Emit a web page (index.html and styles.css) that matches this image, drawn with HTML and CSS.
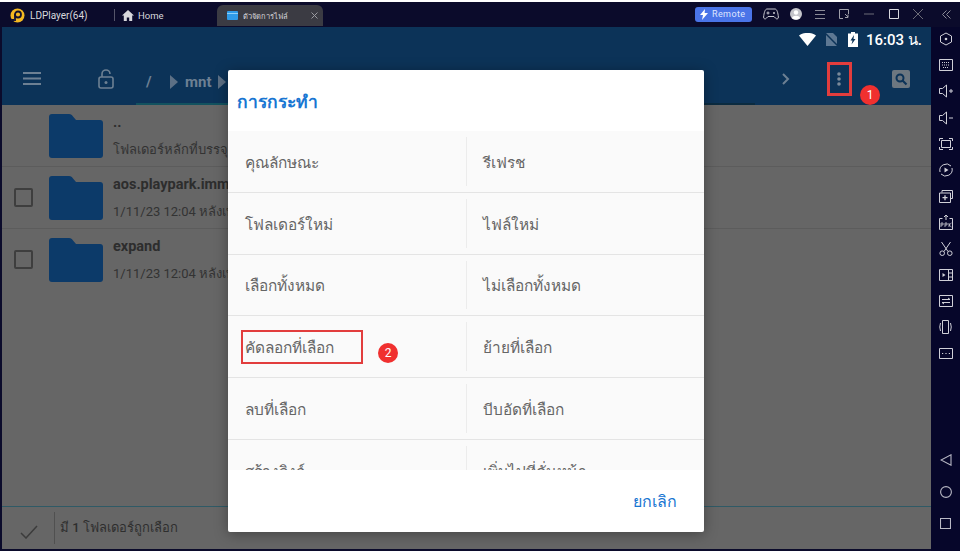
FILE: index.html
```html
<!DOCTYPE html>
<html lang="th">
  <head>
    <meta charset="UTF-8" />
    <title>LDPlayer</title>
    <link rel="stylesheet" href="styles.css">
  </head>
  <body>
    <div class="app">
      <!-- title bar -->
      <header class="titlebar">
        <div class="brand">
          <svg width="15" height="15" viewBox="0 0 15 15"><circle cx="7.5" cy="7.5" r="7" fill="#f5b921"/><circle cx="8" cy="6.5" r="3" fill="none" stroke="#14122e" stroke-width="1.8"/><path d="M5 6v7M1 12h3" stroke="#14122e" stroke-width="1.8"/></svg>
          <span>LDPlayer(64)</span>
        </div>
        <div class="home">
          <svg width="12" height="11" viewBox="0 0 12 11"><path d="M6 0L0 5.5h1.8V11h3V7.5h2.4V11h3V5.5H12z" fill="#d8d8dc"/></svg>
          <span>Home</span>
        </div>
        <div class="tab">
          <svg width="11" height="9" viewBox="0 0 11 9"><path d="M0 1a1 1 0 0 1 1-1h9a1 1 0 0 1 1 1v7a1 1 0 0 1-1 1H1a1 1 0 0 1-1-1z" fill="#2f9be8"/><path d="M0 2h11v1H0z" fill="#8fd0f8"/></svg>
          <span class="tab-name">ตัวจัดการไฟล์</span>
          <svg class="tab-x" width="7" height="7" viewBox="0 0 7 7"><path d="M.5.5l6 6M6.5.5l-6 6" stroke="#9a9aa0" stroke-width="1"/></svg>
        </div>
        <div class="win-buttons">
          <div class="remote">
            <svg width="8" height="11" viewBox="0 0 8 11"><path d="M5 0L0 6h3l-1 5 6-7H4.6z" fill="#fff"/></svg>
            <span>Remote</span>
          </div>
          <svg class="gamepad" width="16" height="12" viewBox="0 0 16 12"><path d="M4 1h8c2 0 3 4 3.400 8 .2 2-2 2.500-3 1L11 8.500H5L3.600 10c-1 1.500-3.200 1-3-1C1 5 2 1 4 1z" fill="none" stroke="#c8c8d0"/><path d="M3.500 5h3M5 3.500v3" stroke="#c8c8d0"/><circle cx="11" cy="5" r="1" fill="#c8c8d0"/></svg>
          <svg class="avatar" width="12" height="12" viewBox="0 0 12 12"><circle cx="6" cy="6" r="6" fill="#c4c4ca"/><circle cx="6" cy="4.500" r="2.200" fill="#fff"/><path d="M2 10c1-3 7-3 8 0a6 6 0 0 1-8 0z" fill="#fff"/></svg>
          <svg class="menu" width="10" height="9" viewBox="0 0 10 9"><path d="M0 .5h10M0 4.500h10M0 8.500h10" stroke="#8a8a96"/></svg>
          <svg class="restore" width="10" height="10" viewBox="0 0 10 10"><path d="M4 9.500H.5V.5h9V5" fill="none" stroke="#a0a0aa"/><path d="M6 5l3 3M9 5.500V8.500H6" fill="none" stroke="#a0a0aa"/></svg>
          <svg class="minimize" width="10" height="10" viewBox="0 0 10 10"><path d="M0 5h10" stroke="#6c6c78"/></svg>
          <svg class="maximize" width="10" height="10" viewBox="0 0 10 10"><path d="M.5.500h9v9h-9z" fill="none" stroke="#d8d8de"/></svg>
          <svg class="close" width="10" height="10" viewBox="0 0 10 10"><path d="M0 0l10 10M10 0L0 10" stroke="#6c6c78"/></svg>
        </div>
        <svg class="collapse" width="9" height="9" viewBox="0 0 9 9"><path d="M4.500.5l-4 4 4 4M8.500.5l-4 4 4 4" fill="none" stroke="#8a8a96"/></svg>
      </header>

      <div class="main">
        <div class="screen">
          <!-- android status bar -->
          <div class="statusbar">
            <svg width="17" height="13" viewBox="0 0 17 13"><path d="M0 2.500C5-1 12-1 17 2.500L8.500 13z" fill="#fff"/></svg>
            <svg class="sim" width="13" height="13" viewBox="0 0 13 13"><path d="M1 0h7l4 4v9H1z" fill="#5e7893"/><path d="M0 0l13 13" stroke="#0c3358" stroke-width="1.500"/></svg>
            <svg class="battery" width="10" height="15" viewBox="0 0 10 15"><path d="M3 0h4v1.500h3V15H0V1.500h3z" fill="#fff"/><path d="M6 3L2.500 8.500h2l-1 4L7.500 7h-2z" fill="#0c3358"/></svg>
            <span class="clock">16:03 น.</span>
          </div>

          <!-- file manager toolbar -->
          <div class="toolbar">
            <svg class="hamburger" width="18" height="13" viewBox="0 0 18 13"><path d="M0 1h18M0 6.500h18M0 12h18" stroke="#6d8093" stroke-width="2"/></svg>
            <svg class="lock" width="16" height="20" viewBox="0 0 16 20"><rect x="1" y="8" width="14" height="11" rx="2" fill="none" stroke="#6d8093" stroke-width="1.600"/><path d="M4 8V5a4 4 0 0 1 8 0" fill="none" stroke="#6d8093" stroke-width="1.600"/><circle cx="8" cy="13.500" r="1.500" fill="#6d8093"/></svg>
            <div class="path">
              <span class="crumb-root">/</span>
              <svg width="8" height="14" viewBox="0 0 8 14"><path d="M0 0l8 7-8 7z" fill="#5d7085"/></svg>
              <span class="crumb">mnt</span>
              <svg width="8" height="14" viewBox="0 0 8 14"><path d="M0 0l8 7-8 7z" fill="#5d7085"/></svg>
            </div>
            <svg class="chevron" width="8" height="12" viewBox="0 0 8 12"><path d="M1 1l5 5-5 5" fill="none" stroke="#6d8093" stroke-width="2"/></svg>
            <svg class="dots" width="4" height="14" viewBox="0 0 4 14"><circle cx="2" cy="2" r="1.800" fill="#7b8a99"/><circle cx="2" cy="7" r="1.800" fill="#7b8a99"/><circle cx="2" cy="12" r="1.800" fill="#7b8a99"/></svg>
            <svg class="search" width="18" height="18" viewBox="0 0 18 18"><rect width="18" height="18" rx="2" fill="#6d7780"/><circle cx="8" cy="8" r="3.500" fill="none" stroke="#0c3358" stroke-width="2"/><path d="M10.500 10.500l4 4" stroke="#0c3358" stroke-width="2.200"/></svg>
          </div>

          <!-- folder list -->
          <ul class="files">
            <li class="file">
              <span class="check-slot"></span>
              <svg class="folder" width="54" height="44" viewBox="0 0 54 44"><path d="M3 0h17c2 0 3 1 4 2.500L27 6h24a3 3 0 0 1 3 3v32a3 3 0 0 1-3 3H3a3 3 0 0 1-3-3V3a3 3 0 0 1 3-3z" fill="#0c3a69"/></svg>
              <div class="file-text">
                <p class="file-name">..</p>
                <p class="file-sub">โฟลเดอร์หลักที่บรรจุ</p>
              </div>
            </li>
            <li class="file">
              <span class="check-slot"><span class="checkbox"></span></span>
              <svg class="folder" width="54" height="44" viewBox="0 0 54 44"><path d="M3 0h17c2 0 3 1 4 2.500L27 6h24a3 3 0 0 1 3 3v32a3 3 0 0 1-3 3H3a3 3 0 0 1-3-3V3a3 3 0 0 1 3-3z" fill="#0c3a69"/></svg>
              <div class="file-text">
                <p class="file-name">aos.playpark.imm</p>
                <p class="file-sub">1/11/23 12:04 หลังเที่ยง</p>
              </div>
            </li>
            <li class="file">
              <span class="check-slot"><span class="checkbox"></span></span>
              <svg class="folder" width="54" height="44" viewBox="0 0 54 44"><path d="M3 0h17c2 0 3 1 4 2.500L27 6h24a3 3 0 0 1 3 3v32a3 3 0 0 1-3 3H3a3 3 0 0 1-3-3V3a3 3 0 0 1 3-3z" fill="#0c3a69"/></svg>
              <div class="file-text">
                <p class="file-name">expand</p>
                <p class="file-sub">1/11/23 12:04 หลังเที่ยง</p>
              </div>
            </li>
          </ul>

          <div class="selbar">
            <svg class="selbar-check" width="18" height="14" viewBox="0 0 18 14"><path d="M1 8l5 5L17 1" fill="none" stroke="#3c3c3c" stroke-width="1.500"/></svg>
            <span class="selbar-text">มี 1 โฟลเดอร์ถูกเลือก</span>
          </div>
        </div>

        <!-- emulator side bar -->
        <aside class="sidebar">
          <div class="side-top">
            <svg width="14" height="14" viewBox="0 0 14 14"><path d="M7 1l5.500 3v6L7 13 1.500 10V4z" fill="none" stroke="#d0d0d8"/><circle cx="7" cy="7" r="1.300" fill="#d0d0d8"/></svg>
            <svg width="14" height="12" viewBox="0 0 14 12"><path d="M.5.500h13v11H.5z" fill="none" stroke="#d0d0d8"/><path d="M3 3.500h8M3 6h8M4 8.500h6" stroke="#d0d0d8" stroke-dasharray="1 1"/></svg>
            <svg width="14" height="14" viewBox="0 0 14 14"><path d="M.5 4.500h3L7.500 1v12l-4-3.500h-3z" fill="none" stroke="#d0d0d8"/><path d="M10 7h4M12 5v4" stroke="#d0d0d8"/></svg>
            <svg width="14" height="14" viewBox="0 0 14 14"><path d="M.5 4.500h3L7.500 1v12l-4-3.500h-3z" fill="none" stroke="#d0d0d8"/><path d="M10 7h4" stroke="#d0d0d8"/></svg>
            <svg width="14" height="12" viewBox="0 0 14 12"><path d="M.5 3V.5H4M10 .5h3.500V3M13.500 9v2.500H10M4 11.500H.5V9" fill="none" stroke="#d0d0d8"/><path d="M2.500 2.500h9v7h-9z" fill="none" stroke="#d0d0d8"/></svg>
            <svg width="14" height="14" viewBox="0 0 14 14"><path d="M1 9a6.500 6.500 0 0 1 11-6M13 5a6.500 6.500 0 0 1-11 6" fill="none" stroke="#d0d0d8"/><path d="M5.500 4.500l4 2.500-4 2.500z" fill="#d0d0d8"/></svg>
            <svg width="14" height="13" viewBox="0 0 14 13"><path d="M3 2.500V.5h10.500v8h-2" fill="none" stroke="#d0d0d8"/><path d="M.5 3h11v9.500H.5z" fill="none" stroke="#d0d0d8"/><path d="M3.500 7.700h5M6 5.200v5" stroke="#d0d0d8" stroke-width="1.300"/></svg>
            <svg width="14" height="15" viewBox="0 0 14 15"><path d="M3.500 3.500h-3v11h13v-11h-3" fill="none" stroke="#d0d0d8"/><path d="M7 0v5M5 2l2-2 2 2" fill="none" stroke="#d0d0d8"/><path d="M2 12V8h2v2H2M6 12V8h2v2H6M10 8v4M12.500 8L10 10l2.500 2" fill="none" stroke="#d0d0d8" stroke-width=".8"/></svg>
            <svg width="14" height="14" viewBox="0 0 14 14"><path d="M2.500 0l6.500 9.500M11.500 0L5 9.500" stroke="#d0d0d8"/><circle cx="3.200" cy="11.200" r="2.300" fill="none" stroke="#d0d0d8"/><circle cx="10.800" cy="11.200" r="2.300" fill="none" stroke="#d0d0d8"/></svg>
            <svg width="14" height="12" viewBox="0 0 14 12"><path d="M.5.500h13v11H.5zM9.500.5v11M9.500 4h4M9.500 8h4" fill="none" stroke="#d0d0d8"/><path d="M3.500 4l3 2-3 2z" fill="#d0d0d8"/></svg>
            <svg width="14" height="12" viewBox="0 0 14 12"><path d="M.5.500h13v11H.5z" fill="none" stroke="#d0d0d8"/><path d="M3 4.500h8L9 3M11 7.500H3l2 1.500" fill="none" stroke="#d0d0d8"/></svg>
            <svg width="13" height="14" viewBox="0 0 13 14"><path d="M3.500.5h6v13h-6zM1.500 3Q0 7 1.500 11M11.500 3q1.500 4 0 8" fill="none" stroke="#d0d0d8"/></svg>
            <svg width="14" height="11" viewBox="0 0 14 11"><path d="M.5.500h13v10H.5z" fill="none" stroke="#d0d0d8"/><path d="M3 5.500h1.200M6.400 5.500h1.200M9.800 5.500H11" stroke="#d0d0d8"/></svg>
          </div>
          <div class="side-nav">
            <svg width="12" height="12" viewBox="0 0 12 12"><path d="M11 .8v10.400L1 6z" fill="none" stroke="#b8b8c4" stroke-width="1.100"/></svg>
            <svg width="12" height="12" viewBox="0 0 12 12"><circle cx="6" cy="6" r="5.400" fill="none" stroke="#b8b8c4" stroke-width="1.100"/></svg>
            <svg width="11" height="11" viewBox="0 0 11 11"><path d="M.5.500h10v10H.5z" fill="none" stroke="#b8b8c4" stroke-width="1.100"/></svg>
          </div>
        </aside>
      </div>

      <!-- action dialog -->
      <div class="dialog">
        <h2 class="dialog-title">การกระทำ</h2>
        <div class="actions">
          <div class="action"><span>คุณลักษณะ</span></div>
          <div class="action"><span>รีเฟรช</span></div>
          <div class="action"><span>โฟลเดอร์ใหม่</span></div>
          <div class="action"><span>ไฟล์ใหม่</span></div>
          <div class="action"><span>เลือกทั้งหมด</span></div>
          <div class="action"><span>ไม่เลือกทั้งหมด</span></div>
          <div class="action"><span>คัดลอกที่เลือก</span></div>
          <div class="action"><span>ย้ายที่เลือก</span></div>
          <div class="action"><span>ลบที่เลือก</span></div>
          <div class="action"><span>บีบอัดที่เลือก</span></div>
          <div class="action"><span>สร้างลิงก์</span></div>
          <div class="action"><span>เพิ่มไปที่คั่นหน้า</span></div>
        </div>
        <div class="dialog-foot"><span class="cancel">ยกเลิก</span></div>
      </div>

      <!-- tutorial annotations -->
      <div class="mark mark-dots"></div>
      <div class="mark mark-copy"></div>
      <div class="badge badge-1">1</div>
      <div class="badge badge-2">2</div>
    </div>
  </body>
</html>
```

FILE: styles.css
```css
html, body {
  margin: 0;
  padding: 0;
}

body {
  width: 960px;
  height: 551px;
  overflow: hidden;
  font-family: Roboto, "Noto Sans", "Liberation Sans", sans-serif;
  background-color: #fff;
}

p, h2, ul {
  margin: 0;
  padding: 0;
}

.app {
  position: relative;
  display: flex;
  flex-direction: column;
  width: 960px;
  height: 549px;
  margin-top: 2px;
  overflow: hidden;
  background-color: #0b0b2b;
}

/* title bar */
.titlebar {
  display: flex;
  align-items: center;
  height: 24px;
  flex: none;
  padding-top: 1px;
  background-color: #0b0b2b;
  color: #d8d8dc;
}

.brand {
  display: flex;
  align-items: center;
  gap: 5px;
  width: 104px;
  padding-left: 10px;
  font-size: 10px;
}

.home {
  display: flex;
  align-items: center;
  gap: 4px;
  width: 95px;
  height: 12px;
  padding-left: 7px;
  border-left: 1px solid #55556a;
  font-size: 9.500px;
}

.tab {
  display: flex;
  align-items: center;
  gap: 5px;
  align-self: flex-end;
  width: 91px;
  height: 21px;
  margin-bottom: 1px;
  padding: 0 5px 0 10px;
  border-radius: 6px 6px 0 0;
  background-color: #3b3b43;
  font-size: 7.500px;
}

.tab-name {
  flex: 1;
  white-space: nowrap;
}

.win-buttons {
  display: flex;
  align-items: center;
  margin: 0 0 2px 372px;
}

.remote {
  display: flex;
  align-items: center;
  gap: 4px;
  width: 57px;
  height: 15px;
  padding-left: 5px;
  box-sizing: border-box;
  border-radius: 3px;
  background-color: #4a74e8;
  color: #dfe6ff;
  font-size: 9px;
  letter-spacing: 0.4px;
}

.gamepad { margin-left: 11px; }
.avatar { margin-left: 11px; }
.menu { margin-left: 13px; }
.restore { margin-left: 14px; }
.minimize { margin-left: 15px; }
.maximize { margin-left: 15px; }
.close { margin-left: 14px; }

.collapse {
  margin: 0 0 2px 19px;
}

.main {
  display: flex;
  flex: 1;
  min-height: 0;
}

.screen {
  display: flex;
  flex-direction: column;
  flex: 1;
  min-width: 0;
  margin: 0 0 2px 2px;
  background-color: #666;
}

/* status bar */
.statusbar {
  display: flex;
  align-items: center;
  height: 25px;
  flex: none;
  padding-left: 797px;
  background-color: #0c3358;
}

.sim { margin-left: 9px; }
.battery { margin-left: 10px; }

.clock {
  margin-left: 8px;
  color: #fff;
  font-size: 15px;
  font-weight: 500;
  white-space: nowrap;
}

/* toolbar */
.toolbar {
  display: flex;
  align-items: center;
  height: 53px;
  flex: none;
  background-color: #0c3358;
}

.hamburger { margin-left: 21px; }
.lock { margin-left: 57px; }

.path {
  display: flex;
  align-items: center;
  gap: 7px;
  width: 619px;
  height: 44px;
  margin: 8px 0 0 22px;
  padding-left: 10px;
  box-sizing: border-box;
  border-bottom: 2px solid #0b2b40;
  border-image: linear-gradient(to right, #12525f 30%, #0b2b40 30%) 1;
  color: #6d8093;
  font-size: 15px;
  font-weight: 700;
}

.crumb-root {
  width: 17px;
}

.chevron { margin-left: 27px; }
.dots { margin-left: 47px; }
.search { margin-left: 51px; }

/* folder list */
.files {
  flex: 1;
  list-style: none;
}

.file {
  display: flex;
  align-items: center;
  height: 61px;
  border-bottom: 1px solid #5c5c5c;
}

.file:last-child {
  border-bottom: none;
}

.check-slot {
  display: flex;
  justify-content: center;
  width: 43px;
  margin-right: 4px;
}

.checkbox {
  width: 15px;
  height: 15px;
  border: 2px solid #3e3e3e;
  border-radius: 2px;
}

.folder {
  flex: none;
}

.file-text {
  margin-left: 10px;
  white-space: nowrap;
}

.file-name {
  color: #2d2d2d;
  font-size: 14.500px;
  font-weight: 700;
  line-height: 20px;
}

.file-sub {
  margin-top: 8px;
  color: #333;
  font-size: 13px;
  line-height: 18px;
}

.selbar {
  display: flex;
  align-items: center;
  height: 43px;
  flex: none;
  box-sizing: border-box;
  padding-left: 18px;
  border-top: 1px solid #2f5a66;
  color: #2e2e2e;
}

.selbar-check {
  margin-top: 7px;
}

.selbar-text {
  margin-left: 16px;
  padding-left: 5px;
  border-left: 1px solid #505050;
  font-size: 13px;
  font-weight: 500;
  line-height: 32px;
}

/* side bar */
.sidebar {
  display: flex;
  flex-direction: column;
  justify-content: space-between;
  align-items: center;
  width: 29px;
  flex: none;
  background-color: #06062a;
}

.side-top {
  display: grid;
  grid-auto-rows: 26.200px;
  place-items: center;
  margin-top: -1px;
}

.side-nav {
  display: flex;
  flex-direction: column;
  align-items: center;
  gap: 20px;
  padding-bottom: 22px;
}

/* dialog */
.dialog {
  position: absolute;
  left: 228px;
  top: 68px;
  display: flex;
  flex-direction: column;
  width: 476px;
  height: 462px;
  border-radius: 2px;
  background-color: #fff;
  box-shadow: 0 2px 14px rgba(0, 0, 0, 0.35);
}

.dialog-title {
  height: 61px;
  flex: none;
  padding-left: 9px;
  color: #1976d2;
  font-size: 17.500px;
  font-weight: 700;
  line-height: 64px;
}

.actions {
  display: grid;
  grid-template-columns: 238px 238px;
  grid-auto-rows: 61.750px;
  height: 339px;
  flex: none;
  overflow: hidden;
  background-color: #fafafa;
}

.action {
  display: flex;
  align-items: center;
  box-sizing: border-box;
  padding: 2px 0 0 17px;
  border-bottom: 1px solid #e4e4e4;
  color: #666;
  font-size: 15.400px;
}

.action:nth-child(even) {
  position: relative;
}

.action:nth-child(even)::before {
  content: "";
  position: absolute;
  left: 0;
  top: 6px;
  bottom: 6px;
  width: 1px;
  background-color: #ececec;
}

.dialog-foot {
  display: flex;
  justify-content: flex-end;
  align-items: center;
  flex: 1;
  padding-right: 27px;
}

.cancel {
  color: #1976d2;
  font-size: 16px;
  font-weight: 500;
}

/* annotations */
.mark {
  position: absolute;
  box-sizing: border-box;
  border: 2px solid #e23d3d;
}

.mark-dots {
  left: 827px;
  top: 60px;
  width: 25px;
  height: 34px;
  border-width: 3px;
}

.mark-copy {
  left: 241px;
  top: 328px;
  width: 122px;
  height: 34px;
}

.badge {
  position: absolute;
  width: 20px;
  height: 20px;
  border-radius: 50%;
  background-color: #f0302f;
  color: #fff;
  font-size: 12px;
  line-height: 20px;
  text-align: center;
}

.badge-1 {
  left: 860px;
  top: 83px;
}

.badge-2 {
  left: 378px;
  top: 341px;
}
```
